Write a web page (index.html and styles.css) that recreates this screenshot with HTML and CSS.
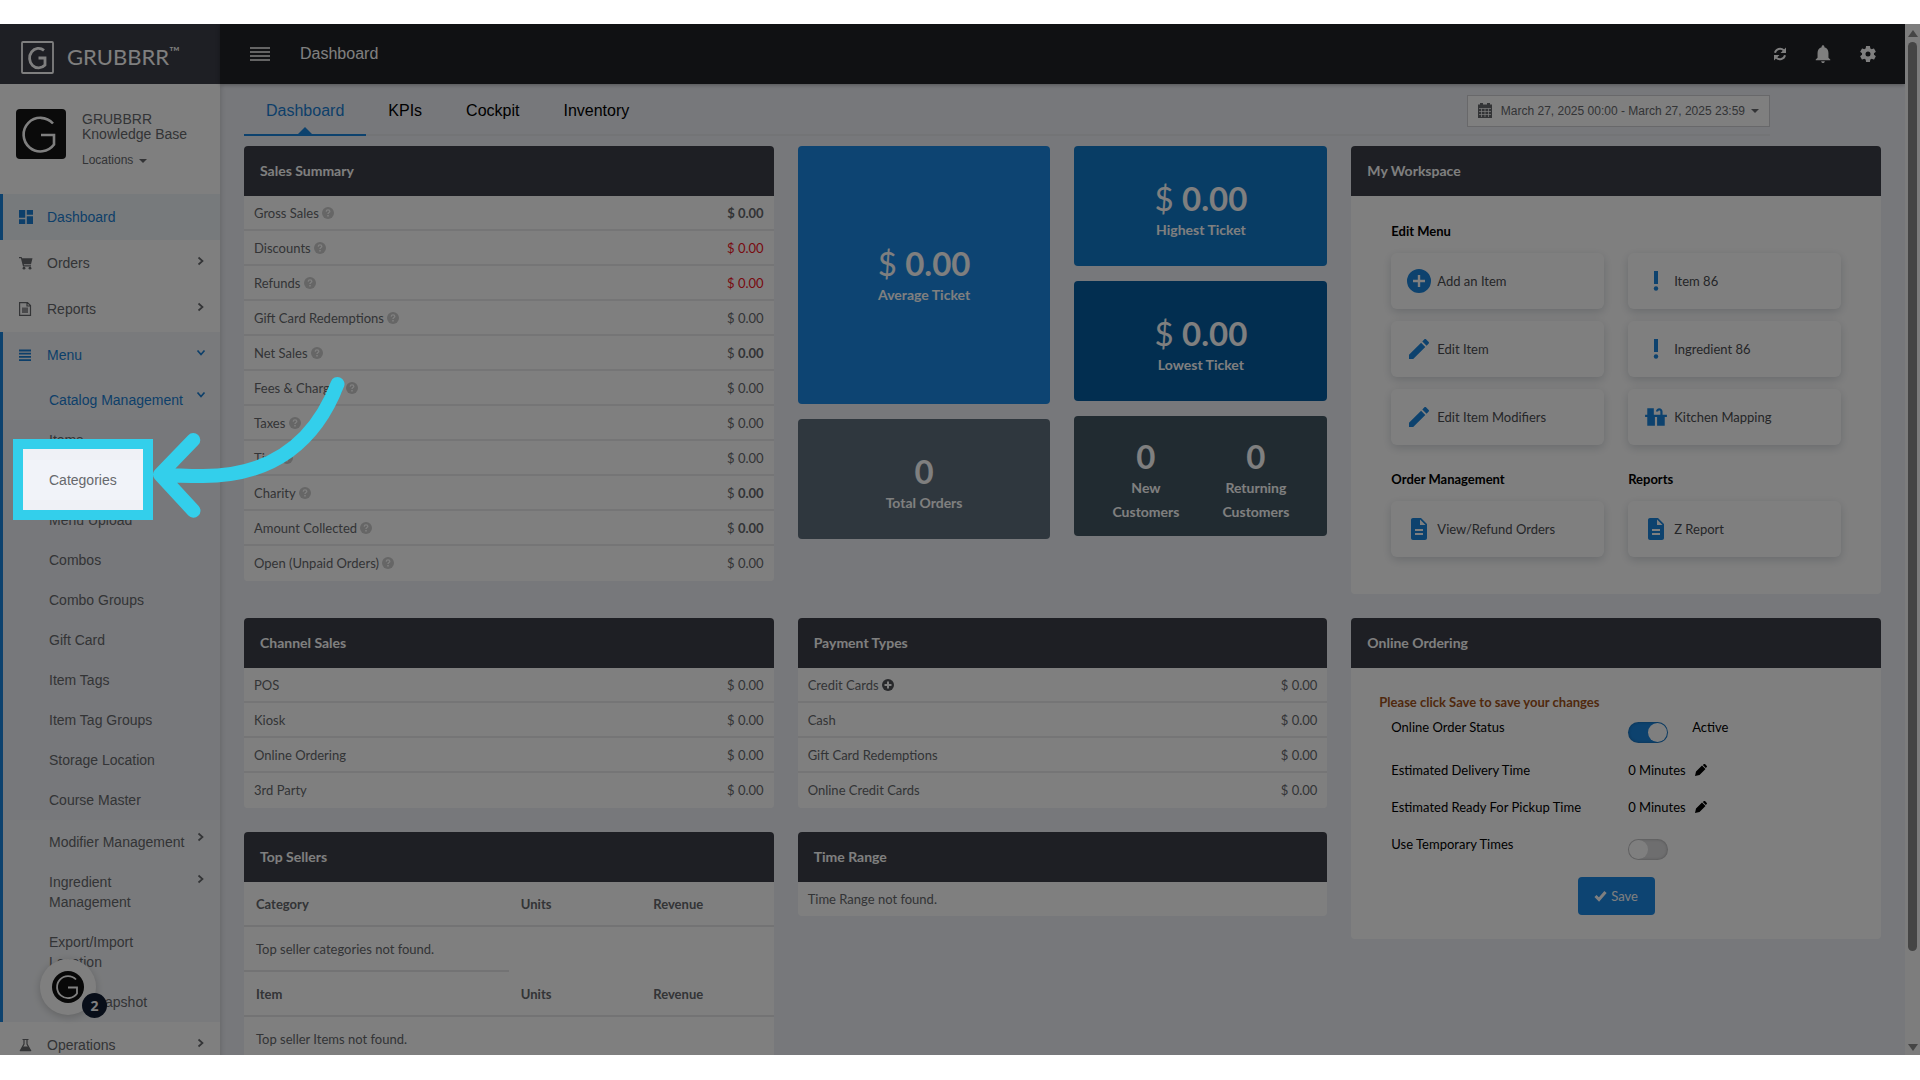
FILE: index.html
```html
<!DOCTYPE html>
<html lang="en">
<head>
<meta charset="utf-8">
<title>Dashboard - GRUBBRR</title>
<link rel="stylesheet" href="styles.css">
</head>
<body>
<svg class="sprite" aria-hidden="true">
  <symbol id="help" viewBox="0 0 12 12"><circle cx="6" cy="6" r="6" fill="currentColor"/><path d="M4.200 4.600C4.300 3.400 5 2.900 6 2.900s1.800.6 1.800 1.500C7.800 5.500 6 5.600 6 7" fill="none" stroke="#fff" stroke-width="1.400"/><path d="M5.200 8h1.600v1.500H5.200z" fill="#fff"/></symbol>
  <symbol id="chevron" viewBox="0 0 8 10"><path d="M1.500 1.500 5.500 5l-4 3.500" fill="none" stroke="currentColor" stroke-width="1.700"/></symbol>
  <symbol id="edit" viewBox="0 0 24 24"><path fill="currentColor" d="M2 17.800V22h4.200L18.300 9.900l-4.200-4.200L2 17.800zM21.700 6.600c.4-.4.4-1.200 0-1.600l-2.700-2.700c-.4-.4-1.200-.4-1.600 0l-2.100 2.100 4.300 4.300 2.100-2.100z"/></symbol>
  <symbol id="alert" viewBox="0 0 24 24"><path fill="currentColor" d="M10 2h4v13h-4z"/><circle cx="12" cy="19.500" r="2.200" fill="currentColor"/></symbol>
  <symbol id="doc" viewBox="0 0 24 24"><path fill="currentColor" d="M14 1H6c-1.100 0-2 .9-2 2v18c0 1.100.9 2 2 2h12c1.100 0 2-.9 2-2V7l-6-6zm2 17H8v-2h8v2zm0-4H8v-2h8v2zm-3-6V2.500L18.500 8H13z"/></symbol>
  <symbol id="add" viewBox="0 0 24 24"><path fill="currentColor" d="M12 0a12 12 0 1 0 0 24 12 12 0 0 0 0-24zm6 13.200h-4.800V18h-2.400v-4.800H6v-2.400h4.800V6h2.400v4.800H18z"/></symbol>
  <symbol id="add-bold" viewBox="0 0 12 12"><circle cx="6" cy="6" r="6" fill="currentColor"/><path d="M2.500 6h7M6 2.500v7" stroke="#fff" stroke-width="2"/></symbol>
  <symbol id="pencil" viewBox="0 0 12 12"><path fill="currentColor" d="M0 12l1-4.500L7 1.500 10.500 5l-6 6zM7.800 1 9 .1q.5-.3 1 0l1.800 1.900q.4.500 0 1l-1 1.100z"/></symbol>
  <symbol id="mark" viewBox="0 0 50 50"><path d="M37 14.500A16.800 16.800 0 1 0 38 35.500V26H25" fill="none" stroke="currentColor" stroke-width="2.600"/></symbol>
</svg>

<div class="frame">
  <aside class="sidebar">
    <a class="brand" href="#">
      <svg width="33" height="33" viewBox="0 0 33 33"><rect x="1" y="1" width="31" height="31" rx="1" fill="none" stroke="currentColor" stroke-width="1.800"/><path d="M23 9.300A9 9.800 0 1 0 24 24v-7h-6.500" fill="none" stroke="currentColor" stroke-width="2.800"/></svg>
      <span>GRUBBRR<sup>™</sup></span>
    </a>
    <div class="profile">
      <div class="avatar"><svg width="50" height="50"><use href="#mark"/></svg></div>
      <div>
        <div class="profile-name">GRUBBRR<br>Knowledge Base</div>
        <button class="locations" type="button">Locations <i class="caret"></i></button>
      </div>
    </div>
    <nav class="nav">
      <a class="nav-item active" href="#"><svg class="nav-icon" viewBox="3 3 18 18"><path fill="currentColor" d="M3 13h8V3H3v10zm0 8h8v-6H3v6zm10 0h8V11h-8v10zm0-18v6h8V3h-8z"/></svg>Dashboard</a>
      <a class="nav-item" href="#"><svg class="nav-icon" viewBox="0 0 14 14"><path fill="currentColor" d="M0 1h2.600l.5 1.300H13.500L12 8.300H4.800l.3 1H12v1.200H4L1.900 2.200H0z"/><circle cx="5" cy="12.200" r="1.400" fill="currentColor"/><circle cx="11" cy="12.200" r="1.400" fill="currentColor"/></svg>Orders<svg class="arrow"><use href="#chevron"/></svg></a>
      <a class="nav-item" href="#"><svg class="nav-icon" viewBox="0 0 14 14"><path fill="none" stroke="currentColor" stroke-width="1.200" d="M.6.6h7.900l3 3v9.800H.6zM8 .8V4h3.500"/><path fill="currentColor" opacity=".7" d="M3 5.500h6v5.500H3z"/></svg>Reports<svg class="arrow"><use href="#chevron"/></svg></a>
      <div class="nav-group">
        <a class="nav-item open" href="#"><svg class="nav-icon" viewBox="0 0 14 14"><path stroke="currentColor" stroke-width="1.800" d="M0 2.500h12M0 5.700h12M0 8.900h12M0 12.100h12"/></svg>Menu<svg class="arrow down"><use href="#chevron"/></svg></a>
        <a class="sub toggle current" href="#">Catalog Management<svg class="arrow down"><use href="#chevron"/></svg></a>
        <div class="leafs">
          <a class="sub" href="#">Items</a>
          <a class="sub hover" href="#">Categories</a>
          <a class="sub" href="#">Menu Upload</a>
          <a class="sub" href="#">Combos</a>
          <a class="sub" href="#">Combo Groups</a>
          <a class="sub" href="#">Gift Card</a>
          <a class="sub" href="#">Item Tags</a>
          <a class="sub" href="#">Item Tag Groups</a>
          <a class="sub" href="#">Storage Location</a>
          <a class="sub" href="#">Course Master</a>
        </div>
        <a class="sub toggle" href="#">Modifier Management<svg class="arrow"><use href="#chevron"/></svg></a>
        <a class="sub" href="#">Ingredient Management<svg class="arrow"><use href="#chevron"/></svg></a>
        <a class="sub" href="#">Export/Import Location</a>
        <a class="sub" href="#">Menu Snapshot</a>
      </div>
      <a class="nav-item" href="#"><svg class="nav-icon" viewBox="0 0 14 14"><path fill="none" stroke="currentColor" stroke-width="1.200" d="M3.500 1.500h6M5 1.500v4.500L1.500 12.500h10L8 6V1.500"/><path fill="currentColor" d="M3.800 8.500h5.400l3 4.700H.8z"/></svg>Operations<svg class="arrow"><use href="#chevron"/></svg></a>
    </nav>
  </aside>

  <div class="page">
    <header class="topbar">
      <button class="icon-btn burger" type="button" aria-label="Toggle menu"><svg width="20" height="14"><path d="M0 1h20M0 5h20M0 9h20M0 13h20" stroke="currentColor" stroke-width="1.400"/></svg></button>
      <h1>Dashboard</h1>
      <div class="tools">
        <button class="icon-btn" type="button" aria-label="Refresh"><svg width="16" height="16" viewBox="0 0 16 16"><path d="M3 6.800A5.200 5.200 0 0 1 11.700 4.300M13 9.200A5.200 5.200 0 0 1 4.300 11.700" fill="none" stroke="currentColor" stroke-width="2"/><path fill="currentColor" d="M14 1.500V7H8.500zM2 14.500V9h5.500z"/></svg></button>
        <button class="icon-btn" type="button" aria-label="Notifications"><svg width="20" height="20" viewBox="1 2 22 20"><path fill="currentColor" d="M12 22c1.100 0 2-.9 2-2h-4c0 1.100.9 2 2 2zm6-6v-5c0-3.070-1.640-5.640-4.500-6.320V4c0-.83-.67-1.500-1.500-1.500s-1.500.67-1.500 1.500v.68C7.630 5.360 6 7.920 6 11v5l-2 2v1h16v-1l-2-2z"/></svg></button>
        <button class="icon-btn" type="button" aria-label="Settings"><svg width="20" height="20" viewBox="0 0 24 24"><path fill="currentColor" d="M19.140 12.940c.04-.3.06-.61.06-.94 0-.32-.02-.64-.07-.94l2.030-1.580c.18-.14.23-.41.12-.61l-1.920-3.320c-.12-.22-.37-.29-.59-.22l-2.390.96c-.5-.38-1.030-.7-1.620-.94l-.36-2.540c-.04-.24-.24-.41-.48-.41h-3.840c-.24 0-.43.17-.47.41l-.36 2.540c-.59.24-1.130.57-1.620.94l-2.390-.96c-.22-.08-.47 0-.59.22L2.740 8.870c-.12.21-.08.47.12.61l2.030 1.580c-.05.3-.09.63-.09.94s.02.64.07.94l-2.030 1.580c-.18.14-.23.41-.12.61l1.920 3.320c.12.22.37.29.59.22l2.390-.96c.5.38 1.030.7 1.620.94l.36 2.540c.05.24.24.41.48.41h3.840c.24 0 .44-.17.47-.41l.36-2.540c.59-.24 1.130-.56 1.620-.94l2.390.96c.22.08.47 0 .59-.22l1.920-3.320c.12-.22.07-.47-.12-.61l-2.010-1.580zM12 15a3 3 0 1 1 0-6 3 3 0 0 1 0 6z"/></svg></button>
      </div>
    </header>

    <main class="content">
      <div class="tabbar">
        <nav class="tabs">
          <a class="tab active" href="#">Dashboard</a>
          <a class="tab" href="#">KPIs</a>
          <a class="tab" href="#">Cockpit</a>
          <a class="tab" href="#">Inventory</a>
        </nav>
        <button class="daterange" type="button"><svg width="14" height="16" viewBox="0 0 14 16"><path fill="currentColor" d="M0 1.500h14V15H0zM2 0h3v3H2zM9 0h3v3H9z"/><path d="M1 5.500h12M1 8.500h12M1 11.500h12M3.500 5.500V14M7 5.500V14M10.500 5.500V14" stroke="#fff" stroke-width=".7"/></svg><span>March 27, 2025 00:00 - March 27, 2025 23:59</span><i class="caret"></i></button>
      </div>

      <div class="columns">
        <section class="panel">
          <h2>Sales Summary</h2>
          <table class="figures">
            <tr><th scope="row">Gross Sales <svg class="help"><use href="#help"/></svg></th><td><b>$ 0.00</b></td></tr>
            <tr><th scope="row">Discounts <svg class="help"><use href="#help"/></svg></th><td class="loss">$ 0.00</td></tr>
            <tr><th scope="row">Refunds <svg class="help"><use href="#help"/></svg></th><td class="loss">$ 0.00</td></tr>
            <tr><th scope="row">Gift Card Redemptions <svg class="help"><use href="#help"/></svg></th><td>$ 0.00</td></tr>
            <tr><th scope="row">Net Sales <svg class="help"><use href="#help"/></svg></th><td>$ <b>0.00</b></td></tr>
            <tr><th scope="row">Fees &amp; Charges <svg class="help"><use href="#help"/></svg></th><td>$ 0.00</td></tr>
            <tr><th scope="row">Taxes <svg class="help"><use href="#help"/></svg></th><td>$ 0.00</td></tr>
            <tr><th scope="row">Tips <svg class="help"><use href="#help"/></svg></th><td>$ 0.00</td></tr>
            <tr><th scope="row">Charity <svg class="help"><use href="#help"/></svg></th><td>$ <b>0.00</b></td></tr>
            <tr><th scope="row">Amount Collected <svg class="help"><use href="#help"/></svg></th><td>$ <b>0.00</b></td></tr>
            <tr><th scope="row">Open (Unpaid Orders) <svg class="help"><use href="#help"/></svg></th><td>$ 0.00</td></tr>
          </table>
        </section>

        <section class="tiles">
          <div class="tile-col">
            <div class="tile tall average"><p class="value">$ <b>0.00</b></p><p class="label">Average Ticket</p></div>
            <div class="tile total"><p class="value"><b>0</b></p><p class="label">Total Orders</p></div>
          </div>
          <div class="tile-col">
            <div class="tile highest"><p class="value">$ <b>0.00</b></p><p class="label">Highest Ticket</p></div>
            <div class="tile lowest"><p class="value">$ <b>0.00</b></p><p class="label">Lowest Ticket</p></div>
            <div class="tile customers">
              <div><p class="value"><b>0</b></p><p class="label">New Customers</p></div>
              <div><p class="value"><b>0</b></p><p class="label">Returning Customers</p></div>
            </div>
          </div>
        </section>

        <section class="panel">
          <h2>My Workspace</h2>
          <div class="workspace">
            <h3 class="wide">Edit Menu</h3>
            <a class="shortcut" href="#"><svg><use href="#add"/></svg>Add an Item</a>
            <a class="shortcut" href="#"><svg><use href="#alert"/></svg>Item 86</a>
            <a class="shortcut" href="#"><svg><use href="#edit"/></svg>Edit Item</a>
            <a class="shortcut" href="#"><svg><use href="#alert"/></svg>Ingredient 86</a>
            <a class="shortcut" href="#"><svg><use href="#edit"/></svg>Edit Item Modifiers</a>
            <a class="shortcut" href="#"><svg viewBox="1 1 22 22"><path fill="currentColor" d="M22 10h-4V7c0-1.660-1.340-3-3-3s-3 1.340-3 3h2c0-.55.45-1 1-1s1 .45 1 1v3H10V4H4v6H2v2h2v8h7v-8h2v8h7v-8h2v-2z"/></svg>Kitchen Mapping</a>
            <h3 class="later">Order Management</h3>
            <h3 class="later">Reports</h3>
            <a class="shortcut" href="#"><svg><use href="#doc"/></svg>View/Refund Orders</a>
            <a class="shortcut" href="#"><svg><use href="#doc"/></svg>Z Report</a>
          </div>
        </section>
      </div>

      <div class="columns">
        <div class="stack">
          <section class="panel">
            <h2>Channel Sales</h2>
            <table class="figures">
              <tr><th scope="row">POS</th><td>$ 0.00</td></tr>
              <tr><th scope="row">Kiosk</th><td>$ 0.00</td></tr>
              <tr><th scope="row">Online Ordering</th><td>$ 0.00</td></tr>
              <tr><th scope="row">3rd Party</th><td>$ 0.00</td></tr>
            </table>
          </section>
          <section class="panel">
            <h2>Top Sellers</h2>
            <table class="sellers">
              <tr><th>Category</th><th>Units</th><th>Revenue</th></tr>
              <tr><td>Top seller categories not found.</td></tr>
              <tr><th>Item</th><th>Units</th><th>Revenue</th></tr>
              <tr><td>Top seller Items not found.</td></tr>
            </table>
          </section>
        </div>

        <div class="stack">
          <section class="panel">
            <h2>Payment Types</h2>
            <table class="figures">
              <tr><th scope="row">Credit Cards <svg class="help plus"><use href="#add-bold"/></svg></th><td>$ 0.00</td></tr>
              <tr><th scope="row">Cash</th><td>$ 0.00</td></tr>
              <tr><th scope="row">Gift Card Redemptions</th><td>$ 0.00</td></tr>
              <tr><th scope="row">Online Credit Cards</th><td>$ 0.00</td></tr>
            </table>
          </section>
          <section class="panel">
            <h2>Time Range</h2>
            <p class="empty">Time Range not found.</p>
          </section>
        </div>

        <section class="panel">
          <h2>Online Ordering</h2>
          <form class="ordering">
            <p class="notice">Please click Save to save your changes</p>
            <div class="field"><label for="status">Online Order Status</label><div><input class="switch" type="checkbox" id="status" checked><span>Active</span></div></div>
            <div class="field"><span>Estimated Delivery Time</span><div>0 Minutes <button class="pen" type="button" aria-label="Edit delivery time"><svg width="12" height="12"><use href="#pencil"/></svg></button></div></div>
            <div class="field"><span>Estimated Ready For Pickup Time</span><div>0 Minutes <button class="pen" type="button" aria-label="Edit pickup time"><svg width="12" height="12"><use href="#pencil"/></svg></button></div></div>
            <div class="field"><label for="temp">Use Temporary Times</label><div><input class="switch" type="checkbox" id="temp"></div></div>
            <button class="save" type="button"><svg width="13" height="12" viewBox="0 0 13 12"><path d="M1.500 6 5 9.500 11.500 2" fill="none" stroke="currentColor" stroke-width="3"/></svg>Save</button>
          </form>
        </section>
      </div>
    </main>
  </div>

  <div class="scrollbar" aria-hidden="true"><i class="up"></i><i class="thumb"></i><i class="dn"></i></div>

  <button class="chat" type="button" aria-label="Open help"><svg width="32" height="32" viewBox="0 0 32 32"><circle cx="16" cy="16" r="16" fill="#111"/><path d="M24 8.500A11 11 0 1 0 25 22.500V16.500H16" fill="none" stroke="#fff" stroke-width="1.800"/></svg><span class="count">2</span></button>

  <div class="spotlight"></div>
  <svg class="pointer" width="200" height="150" viewBox="150 375 200 150"><path d="M337.500 384C316 440 274 476 203 476c-18 0-30-.5-43-1.500M193.300 440 160 474.500l33.500 36.200" fill="none" stroke="#33cfeb" stroke-width="14" stroke-linecap="round" stroke-linejoin="round"/></svg>
</div>
</body>
</html>
```
FILE: styles.css
```css
* { box-sizing: border-box; }

body {
  margin: 0;
  padding: 24px 0 25px;
  background: #fff;
  font-family: "Liberation Sans", Arial, sans-serif;
  font-size: 14px;
  line-height: 20px;
  color: #66686c;
}

h1, h2, h3, p { margin: 0; font-size: inherit; }
a { color: inherit; text-decoration: none; }
button { font: inherit; color: inherit; border: 0; padding: 0; background: none; }
.sprite { position: absolute; width: 0; height: 0; }

.frame {
  position: relative;
  display: grid;
  grid-template-columns: 220px minmax(0, 1fr) 15px;
  height: calc(100vh - 49px);
  overflow: hidden;
  background: #eef0f6;
}

.caret {
  display: inline-block;
  border: 4px solid transparent;
  border-top-color: currentColor;
  border-bottom: 0;
  vertical-align: middle;
}

/* Sidebar */
.sidebar {
  background: #fff;
  box-shadow: 1px 0 5px rgba(0, 0, 0, .15);
  overflow: hidden;
}
.brand {
  display: flex;
  align-items: center;
  gap: 13px;
  height: 60px;
  padding: 6px 0 0 21px;
  background: #3c3e48;
  color: #fff;
  font: 22px/32px Lato, sans-serif;
}
.brand sup { font-size: 14px; line-height: 14px; }
.profile {
  display: flex;
  gap: 16px;
  height: 110px;
  padding: 25px 16px 0;
}
.avatar {
  width: 50px;
  height: 50px;
  border-radius: 4px;
  background: #141414;
  color: #fff;
}
.profile-name { padding-top: 3px; line-height: 15px; }
.locations { margin-top: 8px; font-size: 12px; }
.locations .caret { margin-left: 2px; }

.nav-item {
  position: relative;
  display: flex;
  align-items: center;
  gap: 14px;
  height: 46px;
  padding-left: 19px;
}
.nav-icon { width: 14px; height: 14px; }
.nav-item.active { background: #eef4f8; color: #1a7fd4; box-shadow: inset 3px 0 #1a84dc; }
.nav-item.open, .sub.current { color: #1a7fd4; }
.nav-group { background: #f3f5f8; box-shadow: inset 3px 0 #1a84dc; }
.nav-group .leafs { margin-left: 3px; background: #eff1f6; }
.leafs .sub { padding-left: 46px; }
.sub {
  position: relative;
  display: block;
  padding: 10px 33px 10px 49px;
}
.sub.toggle { padding-top: 12px; }
.sub.hover { background: #f1f3f9; }
.arrow {
  position: absolute;
  right: 15px;
  top: 16px;
  width: 8px;
  height: 10px;
}
.sub .arrow { top: 12px; }
.arrow.down { transform: rotate(90deg); }

/* Top bar */
.page { min-width: 0; }
.topbar {
  display: flex;
  align-items: center;
  height: 60px;
  padding: 0 27px 0 30px;
  background: #202226;
  color: #fff;
  box-shadow: 0 1px 4px rgba(0, 0, 0, .3);
}
.topbar h1 { margin-left: 30px; font-size: 16px; font-weight: 400; }
.icon-btn { display: flex; }
.tools { display: flex; align-items: center; gap: 25px; margin-left: auto; }

/* Content */
.content { padding: 0 24px; }
.tabbar {
  display: flex;
  align-items: flex-start;
  justify-content: space-between;
  height: 52px;
  margin-right: 111px;
  border-bottom: 2px solid #e6e8ec;
}
.tabs { display: flex; }
.tab {
  position: relative;
  height: 52px;
  padding: 17px 22px 0;
  font-size: 16px;
  color: #000;
}
.tab.active { color: #1a7fd4; border-bottom: 2px solid #1a84dc; }
.tab.active::after {
  content: "";
  position: absolute;
  left: 50%;
  bottom: 0;
  margin-left: -7px;
  border: 7px solid transparent;
  border-bottom-color: #1a84dc;
  border-top: 0;
}
.daterange {
  display: flex;
  align-items: center;
  gap: 6px;
  height: 32px;
  margin-top: 11px;
  padding: 0 10px;
  border: 1px solid #d0d0d4;
  background: #fff;
  font-size: 12px;
}
.daterange span { margin-left: 3px; }

.columns {
  display: grid;
  grid-template-columns: repeat(3, minmax(0, 1fr));
  gap: 24px;
  align-items: start;
  margin-top: 10px;
  font-family: Lato, sans-serif;
  font-size: 13px;
}
.columns + .columns { margin-top: 24px; }
.stack { display: grid; gap: 24px; }
.panel { border-radius: 4px; overflow: hidden; background: #fff; }
.panel h2 {
  padding: 15px 16px;
  background: #3c3e48;
  color: #fff;
  font-size: 14px;
}

table { width: 100%; border-spacing: 0; }
.figures th, .figures td {
  height: 35px;
  padding: 0 10px;
  border-bottom: 2px solid #ebebed;
  text-align: left;
  font-weight: 400;
}
.figures tr:last-child > * { border-bottom-color: #fff; }
.figures td { text-align: right; }
.loss { color: #f0141e; }
.help { width: 12px; height: 12px; color: #ccc; vertical-align: -1px; }
.help.plus { color: #505256; }

.sellers { table-layout: fixed; }
.sellers th, .sellers td {
  height: 45px;
  padding: 0 12px;
  border-bottom: 2px solid #e6e6e8;
  text-align: left;
}
.sellers th:not(:first-child) { width: 25%; }
.empty { padding: 7px 10px; }

/* Ticket tiles */
.tiles { display: grid; grid-template-columns: 1fr 1fr; gap: 24px; align-items: start; }
.tile-col { display: grid; gap: 15px; }
.tile {
  display: flex;
  flex-direction: column;
  align-items: center;
  justify-content: center;
  height: 120px;
  padding-top: 8px;
  border-radius: 4px;
  color: #fff;
  text-align: center;
}
.tile.tall { height: 258px; padding-top: 0; }
.value { font-size: 33px; line-height: 40px; }
.label { font-size: 14px; line-height: 24px; font-weight: 700; }
.average { background: #1a88e4; }
.highest { background: #107aca; }
.lowest { background: #045ca0; }
.total { background: #5e6e7c; }
.customers { flex-direction: row; background: #425662; }
.customers > div { width: 110px; padding: 0 16px; }

/* Workspace */
.workspace {
  display: grid;
  grid-template-columns: 1fr 1fr;
  gap: 12px 24px;
  padding: 25px 40px 37px;
}
.workspace h3 { color: #000; }
.wide { grid-column: 1 / -1; }
.later { margin-top: 12px; }
.shortcut {
  display: flex;
  align-items: center;
  gap: 6px;
  height: 56px;
  padding: 0 16px;
  border-radius: 6px;
  background: #fff;
  box-shadow: 0 3px 10px rgba(20, 40, 60, .18);
  color: #4a4c50;
}
.shortcut svg { width: 24px; height: 24px; color: #1a84dc; }

/* Online ordering */
.ordering { padding: 24px 40px; color: #000; }
.notice { margin: 0 0 5px -12px; color: #a0521a; font-weight: 700; }
.field {
  display: grid;
  grid-template-columns: 1fr 1fr;
  gap: 24px;
  align-items: start;
  margin-bottom: 17px;
}
.field div { display: flex; align-items: flex-start; }
.field div span { margin-left: 24px; }
.pen { margin: 4px 0 0 9px; display: flex; }
.switch {
  appearance: none;
  width: 40px;
  height: 21px;
  margin: 5px 0 0;
  padding: 1px;
  border-radius: 11px;
  background: #dcdcde;
  box-shadow: inset 0 0 3px rgba(0, 0, 0, .3);
}
.switch::before {
  content: "";
  display: block;
  width: 19px;
  height: 19px;
  border-radius: 50%;
  background: #fff;
}
.switch:checked { background: #1a84dc; }
.switch:checked::before { margin-left: auto; }
.save {
  display: flex;
  align-items: center;
  justify-content: center;
  gap: 4px;
  width: 77px;
  height: 38px;
  margin: 0 auto;
  border-radius: 4px;
  background: #1a88e4;
  color: #fff;
}

/* Window scrollbar */
.scrollbar {
  display: flex;
  flex-direction: column;
  align-items: center;
  height: calc(100vh - 49px);
  padding: 6px 0 4px;
  background: #fafafa;
}
.scrollbar i { flex-shrink: 0; border: 5px solid transparent; }
.scrollbar .up { border-top: 0; border-bottom: 7px solid #8a8a8a; }
.scrollbar .dn { margin-top: auto; border-bottom: 0; border-top: 7px solid #8a8a8a; }
.scrollbar .thumb {
  width: 9px;
  height: 89%;
  margin-top: 5px;
  border: 0;
  border-radius: 5px;
  background: #8a8a8a;
}

/* Floating chat launcher */
.chat {
  position: absolute;
  left: 40px;
  bottom: 40px;
  display: flex;
  align-items: center;
  justify-content: center;
  width: 56px;
  height: 56px;
  border-radius: 50%;
  background: #fff;
  box-shadow: 0 2px 8px rgba(0, 0, 0, .2);
}
.count {
  position: absolute;
  right: -11px;
  bottom: -3px;
  width: 25px;
  height: 25px;
  border-radius: 50%;
  background: #101c32;
  color: #fff;
  font: 700 14px/25px "Open Sans", sans-serif;
}

/* Walkthrough highlight: dims everything outside the box */
.spotlight {
  position: absolute;
  left: 13px;
  top: 415px;
  width: 140px;
  height: 81px;
  border: 10px solid #33cfeb;
  box-shadow: 0 0 0 3000px rgba(0, 0, 0, .5);
}
.pointer { position: absolute; left: 150px; top: 351px; }
```
